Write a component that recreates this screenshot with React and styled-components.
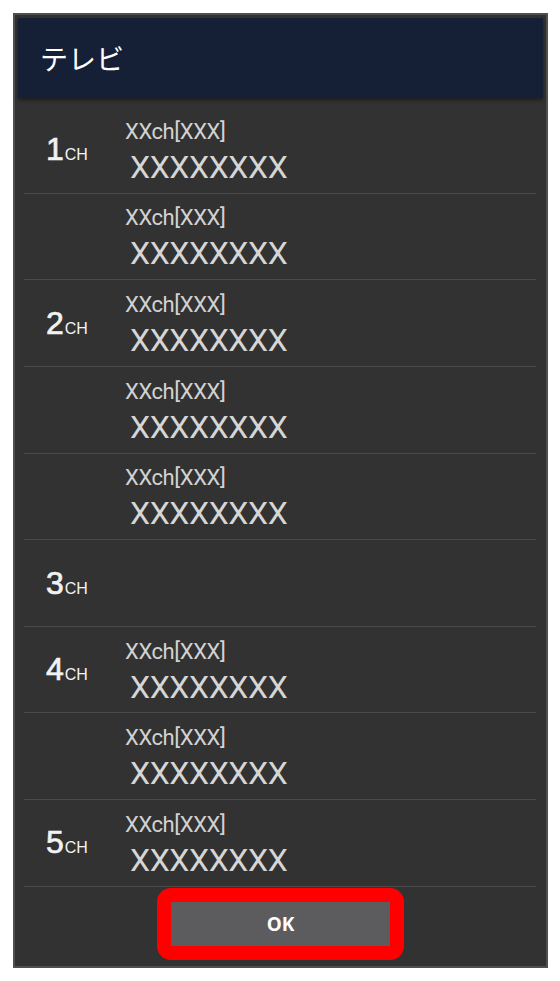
import React from 'react'
import styled, { createGlobalStyle } from 'styled-components'

const Global = createGlobalStyle`
  html, body {
    margin: 0;
    padding: 0;
    background: #fff;
  }
  body {
    font-family: Roboto, "Noto Sans", "Noto Sans CJK JP", sans-serif;
  }
`

const Frame = styled.div`
  margin: 13px 0 0 13px;
  width: 535px;
  height: 955px;
  box-sizing: border-box;
  border: 2px solid #4f4f4f;
  background: #323232;
  padding: 3px;
  display: flex;
  flex-direction: column;
`

const TitleBar = styled.div`
  height: 80px;
  flex: none;
  display: flex;
  align-items: center;
  padding-left: 22px;
  background: #152036;
  color: #fff;
  font-family: "Noto Sans CJK JP", "Noto Sans", sans-serif;
  font-size: 28px;
  box-shadow: 0 2px 4px rgba(0, 0, 0, 0.45);
  position: relative;
  z-index: 1;
`

const List = styled.div`
  padding: 9px 7px 0 6px;
  flex: none;
`

const Row = styled.div`
  height: 86.65px;
  box-sizing: border-box;
  border-bottom: 1px solid #4a4a4a;
  display: flex;
  align-items: center;
  padding-left: 22px;
`

const Channel = styled.div`
  width: 79px;
  flex: none;
  color: #f2f2f2;
  white-space: nowrap;
  font-family: "Liberation Sans", Arial, sans-serif;
`

const Num = styled.span`
  font-size: 32px;
  -webkit-text-stroke: 0.7px #f2f2f2;
`

const Unit = styled.span`
  font-size: 16px;
  margin-left: 1px;
`

const Info = styled.div`
  display: flex;
  flex-direction: column;
  padding-top: 8px;
`

const Sub = styled.div`
  font-size: 22px;
  line-height: 26px;
  letter-spacing: -0.4px;
  color: #d2d2d2;
`

const Main = styled.div`
  font-size: 32px;
  line-height: 44px;
  letter-spacing: -0.4px;
  margin-left: 5px;
  color: #d6d6d6;
`

const Footer = styled.div`
  flex: 1;
  display: flex;
  align-items: center;
  justify-content: center;
  padding-bottom: 1px;
`

const Highlight = styled.div`
  border: 14px solid #ff0000;
  border-radius: 14px;
  display: flex;
`

const Button = styled.button`
  width: 219px;
  height: 44px;
  border: none;
  background: #5c5c5e;
  color: #fff;
  font-family: "Noto Sans", Roboto, sans-serif;
  font-size: 19px;
  font-weight: 700;
  padding: 0;
`

const rows = [
  { ch: 1, show: true },
  { show: true },
  { ch: 2, show: true },
  { show: true },
  { show: true },
  { ch: 3, show: false },
  { ch: 4, show: true },
  { show: true },
  { ch: 5, show: true },
]

const App = () => {
  return (
    <>
      <Global />
      <Frame>
        <TitleBar>テレビ</TitleBar>
        <List>
          {rows.map((r, i) => (
            <Row key={i}>
              <Channel>
                {r.ch && (
                  <>
                    <Num>{r.ch}</Num>
                    <Unit>CH</Unit>
                  </>
                )}
              </Channel>
              {r.show && (
                <Info>
                  <Sub>XXch[XXX]</Sub>
                  <Main>XXXXXXXX</Main>
                </Info>
              )}
            </Row>
          ))}
        </List>
        <Footer>
          <Highlight>
            <Button>OK</Button>
          </Highlight>
        </Footer>
      </Frame>
    </>
  )
}

export default App
